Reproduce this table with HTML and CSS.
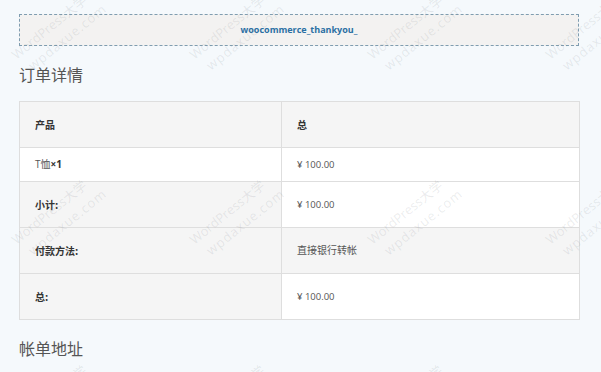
FILE: index.html
```html
<!DOCTYPE html>
<html lang="zh-CN">
<head>
<meta charset="utf-8">
<title>订单详情</title>
<link rel="stylesheet" href="styles.css">
</head>
<body>
<div class="screen">
  <div class="page">
    <div class="hook">woocommerce_thankyou_</div>
    <h2 class="section-title">订单详情</h2>
    <table class="order-table">
      <colgroup><col class="col-name"><col class="col-total"></colgroup>
      <thead>
        <tr><th>产品</th><th>总</th></tr>
      </thead>
      <tbody>
        <tr class="item"><td>T恤<strong class="qty">×1</strong></td><td class="price">¥ 100.00</td></tr>
      </tbody>
      <tfoot>
        <tr><th>小计:</th><td class="price">¥ 100.00</td></tr>
        <tr class="alt"><th>付款方法:</th><td>直接银行转帐</td></tr>
        <tr><th>总:</th><td class="price">¥ 100.00</td></tr>
      </tfoot>
    </table>
    <h2 class="section-title">帐单地址</h2>
  </div>

  <div class="watermarks" aria-hidden="true">
    <div class="wm-grid">
      <div class="wm"><span>WordPress大学</span><span class="l2">wpdaxue.com</span></div>
      <div class="wm"><span>WordPress大学</span><span class="l2">wpdaxue.com</span></div>
      <div class="wm"><span>WordPress大学</span><span class="l2">wpdaxue.com</span></div>
      <div class="wm"><span>WordPress大学</span><span class="l2">wpdaxue.com</span></div>
      <div class="wm"><span>WordPress大学</span><span class="l2">wpdaxue.com</span></div>
      <div class="wm"><span>WordPress大学</span><span class="l2">wpdaxue.com</span></div>
      <div class="wm"><span>WordPress大学</span><span class="l2">wpdaxue.com</span></div>
      <div class="wm"><span>WordPress大学</span><span class="l2">wpdaxue.com</span></div>
      <div class="wm"><span>WordPress大学</span><span class="l2">wpdaxue.com</span></div>
      <div class="wm"><span>WordPress大学</span><span class="l2">wpdaxue.com</span></div>
      <div class="wm"><span>WordPress大学</span><span class="l2">wpdaxue.com</span></div>
      <div class="wm"><span>WordPress大学</span><span class="l2">wpdaxue.com</span></div>
    </div>
  </div>
</div>
</body>
</html>
```

FILE: styles.css
```css
html, body {
  margin: 0;
  padding: 0;
  background: #f5f9fc;
}
body {
  font-family: "Open Sans", "Noto Sans CJK SC", sans-serif;
  color: #555;
}
.screen {
  position: relative;
  width: 601px;
  height: 372px;
  overflow: hidden;
}
.page {
  width: 560px;
  padding: 14px 0 0 19px;
}
.hook {
  box-sizing: border-box;
  height: 32px;
  line-height: 30px;
  border: 1px dashed #7f9db0;
  background: #f3f2f1;
  text-align: center;
  font-size: 9px;
  font-weight: 700;
  color: #2a6fa3;
}
.section-title {
  margin: 16px 0 15px;
  font-size: 16px;
  line-height: 24px;
  font-weight: 400;
  color: #555;
  font-family: "Noto Sans CJK SC", sans-serif;
}
.order-table {
  width: 560px;
  table-layout: fixed;
  border-collapse: separate;
  border-spacing: 0;
  border-top: 1px solid #dedede;
  border-left: 1px solid #dedede;
  font-size: 10px;
}
.col-name { width: 262px; }
.col-total { width: 298px; }
.order-table th,
.order-table td {
  text-align: left;
  padding: 15px 15px;
  line-height: 15px;
  border-right: 1px solid #dedede;
  border-bottom: 1px solid #dedede;
  background: #fff;
}
.order-table th {
  font-weight: 700;
  color: #333;
  font-family: "Noto Sans CJK SC", sans-serif;
  background: #f5f5f5;
}
.order-table td {
  color: #555;
  font-family: "Open Sans", "Noto Sans CJK SC", sans-serif;
}
.order-table td.price {
  font-size: 9.5px;
}
.order-table tr.alt td {
  background: #f5f5f5;
}
.order-table tr.item td {
  padding-top: 9px;
  padding-bottom: 9px;
}
.qty {
  font-weight: 700;
  color: #333;
}

.watermarks {
  position: absolute;
  inset: 0;
  overflow: hidden;
  pointer-events: none;
}
.wm-grid {
  display: grid;
  grid-template-columns: repeat(4, 178px);
  grid-auto-rows: 185px;
  margin: -58px 0 0 -34px;
}
.wm {
  display: flex;
  flex-direction: column;
  align-items: center;
  justify-content: center;
  transform: rotate(-39deg);
  font-family: "Open Sans", "Noto Sans CJK SC", sans-serif;
  font-size: 13px;
  line-height: 19px;
  color: rgba(90, 100, 110, 0.12);
  white-space: nowrap;
}
.wm .l2 {
  margin-left: 16px;
  letter-spacing: 1px;
}
```
